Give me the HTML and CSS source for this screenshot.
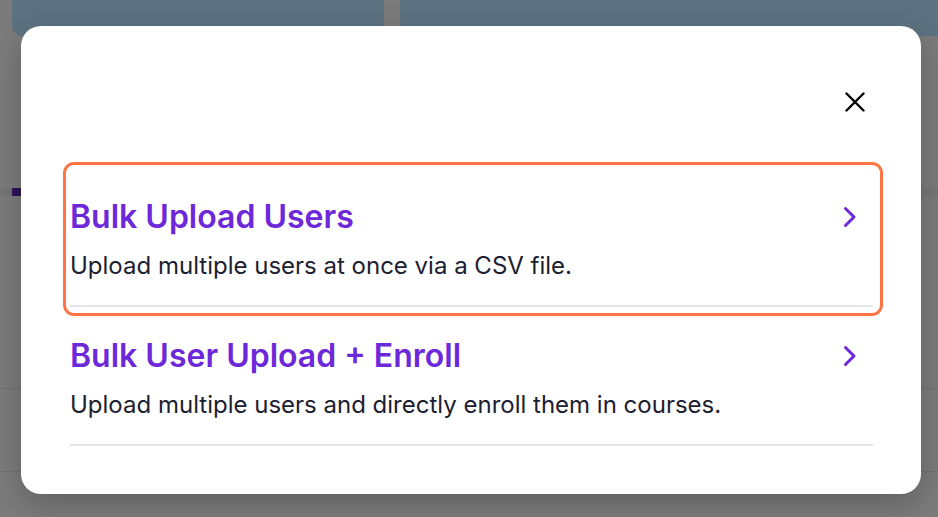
FILE: index.html
```html
<!DOCTYPE html>
<html lang="en">
<head>
<meta charset="utf-8">
<title>Bulk upload</title>
<link rel="stylesheet" href="styles.css">
</head>
<body>
<div class="page">
  <div class="cards">
    <div class="card card-left"></div>
    <div class="card card-right"></div>
  </div>
  <div class="tabbar">
    <div class="tab-active"></div>
  </div>
  <div class="rule rule-a"></div>
  <div class="rule rule-b"></div>
</div>

<div class="modal" role="dialog" aria-modal="true">
  <div class="modal-header">
    <button class="close" aria-label="Close">
      <svg width="20" height="20" viewBox="0 0 20 20" fill="none" stroke="#000" stroke-width="2.4" stroke-linecap="round">
        <path d="M1.5 1.5 L18.5 18.5 M18.5 1.5 L1.5 18.5"/>
      </svg>
    </button>
  </div>
  <ul class="options">
    <li class="option option-focus">
      <div class="option-head">
        <span class="option-title">Bulk Upload Users</span>
        <svg class="chev" width="14" height="22" viewBox="0 0 14 22" fill="none" stroke="#6d28d9" stroke-width="3" stroke-linecap="round" stroke-linejoin="round">
          <path d="M2.5 2.5 L11 11 L2.5 19.5"/>
        </svg>
      </div>
      <p class="option-desc">Upload multiple users at once via a CSV file.</p>
    </li>
    <li class="option">
      <div class="option-head">
        <span class="option-title">Bulk User Upload + Enroll</span>
        <svg class="chev" width="14" height="22" viewBox="0 0 14 22" fill="none" stroke="#6d28d9" stroke-width="3" stroke-linecap="round" stroke-linejoin="round">
          <path d="M2.5 2.5 L11 11 L2.5 19.5"/>
        </svg>
      </div>
      <p class="option-desc">Upload multiple users and directly enroll them in courses.</p>
    </li>
  </ul>
</div>
</body>
</html>
```
FILE: styles.css
```css
* { box-sizing: border-box; }
html, body { margin: 0; padding: 0; }
body {
  width: 938px;
  height: 517px;
  overflow: hidden;
  background: #7b7b7b;
  font-family: Inter, "Noto Sans", sans-serif;
}
.page {
  position: relative;
  height: 517px;
}
.cards {
  display: flex;
  gap: 16px;
  padding-left: 12px;
}
.card {
  height: 36px;
  background: #5d7280;
  border-radius: 0 0 10px 10px;
}
.card-left { width: 372px; }
.card-right { flex: 1; border-radius: 0 0 0 10px; }

.tabbar {
  margin-top: 152px;
  height: 8px;
  background: #767676;
  padding-left: 12px;
}
.tab-active {
  width: 9px;
  height: 8px;
  background: #2b1456;
}
.rule {
  height: 1px;
  background: #707070;
}
.rule-a { margin-top: 192px; }
.rule-b { margin-top: 82px; }

.modal {
  position: absolute;
  left: 21px;
  top: 26px;
  width: 900px;
  height: 468px;
  background: #fff;
  border-radius: 20px;
  box-shadow: 0 10px 30px rgba(0, 0, 0, 0.22);
  padding: 58px 48px 0 49px;
}
.modal-header {
  display: flex;
  justify-content: flex-end;
}
.close {
  width: 36px;
  height: 36px;
  border: 0;
  padding: 0;
  background: transparent;
  display: flex;
  align-items: center;
  justify-content: center;
  cursor: pointer;
}
.options {
  list-style: none;
  margin: 48px 0 0 0;
  padding: 0;
}
.option {
  position: relative;
  height: 139px;
  padding-top: 29px;
  border-bottom: 2px solid #e5e5ee;
}
.option-focus::after {
  content: "";
  position: absolute;
  top: -6px;
  left: -7px;
  right: -10px;
  bottom: -11px;
  border: 3px solid #ff7444;
  border-radius: 11px;
  pointer-events: none;
}
.option-head {
  display: flex;
  align-items: center;
  justify-content: space-between;
  padding-right: 16px;
  height: 40px;
}
.option-title {
  font-size: 32px;
  font-weight: 600;
  color: #6d28d9;
  line-height: 40px;
}
.chev { display: block; }
.option-desc {
  margin: 13px 0 0 0;
  font-size: 24px;
  line-height: 32px;
  color: #1c2030;
}
```
